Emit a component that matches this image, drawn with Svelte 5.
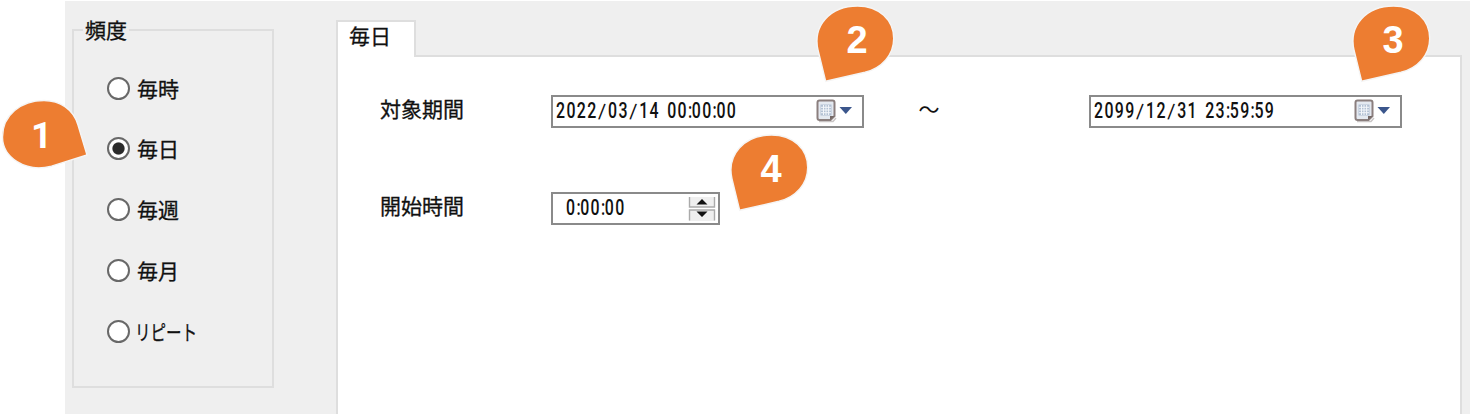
<script>
  const options = ['毎時', '毎日', '毎週', '毎月', 'リピート'];
  const selected = '毎日';

  const tail = 'M9.7 76.3 L2 45 C-3.5 21 14 1 41.5 1 C63 1 77.7 15 77.7 33.5 C77.7 50 66 63 49 67.3 Z';
  const side = 'M86 56 L50.5 67.2 C24 74 1.5 58 1.5 38 C1.5 16 20 1.5 43 1.5 C59 1.5 72.5 10.5 77 26 Z';
  const pins = [
    { n: 1, x: 1, y: 99, d: side, tx: 40.5, ty: 48.5 },
    { n: 2, x: 816, y: 5, d: tail, tx: 41, ty: 48.3 },
    { n: 3, x: 1352, y: 5, d: tail, tx: 41, ty: 48.3 },
    { n: 4, x: 729.6, y: 134, d: tail, tx: 41, ty: 48.3 }
  ];

  const squeeze = 0.74;
  const advance = { ':': 3.8, '/': 10.4, ' ': 7.2 };
  const bearing = { ':': 0, '/': 0.6 };
  function positions(value) {
    let x = 0;
    return [...value].map((c) => {
      const at = (x + (bearing[c] ?? 0)) / squeeze;
      x += advance[c] ?? 10.4;
      return at.toFixed(2);
    }).join(' ');
  }
  function tilts(value) {
    return [...value].map((c) => (c === '/' ? 8 : 0)).join(' ');
  }
</script>

{#snippet digits(value)}
  <svg class="digits" width="190" height="28">
    <text transform="scale({squeeze} 1)" x={positions(value)} rotate={tilts(value)} y="21">{value}</text>
  </svg>
{/snippet}

{#snippet dateField(value)}
  <div class="field date">
    {@render digits(value)}
    <svg class="calendar" width="37" height="24" viewBox="0 0 37 24">
      <path d="M3 22.5H17L20 19" fill="none" stroke="#c9c5c5" stroke-width="1.5" />
      <path d="M3.5 1.5H16.5Q18.5 1.5 18.5 3.5V17L14.5 21H3.5Q1.5 21 1.5 19V3.5Q1.5 1.5 3.5 1.5Z" fill="#e4e9f0" stroke="#8b7f7e" stroke-width="2" />
      <rect x="4.5" y="5.5" width="11" height="11" fill="#b3c1d3" />
      <path d="M5 8.3H15M5 11H15M5 13.7H15M7.5 6V16M10 6V16M12.6 6V16" stroke="#f3f6fa" />
      <path d="M14 21V17H18.5Z" fill="#756967" />
      <path d="M23.5 8H36L29.8 15Z" fill="#3b568c" />
    </svg>
  </div>
{/snippet}

<main>
  <section class="window">
    <fieldset>
      <legend>頻度</legend>
      {#each options as option}
        <div class="option">
          <span class="radio" class:on={option === selected}></span>
          <span class="name" class:kana={option === 'リピート'}>{option}</span>
        </div>
      {/each}
    </fieldset>

    <div class="tabs">
      <div class="tab">毎日</div>
      <div class="panel">
        <div class="row">
          <span class="label">対象期間</span>
          {@render dateField('2022/03/14 00:00:00')}
          <svg class="tilde" width="22" height="10" viewBox="0 0 22 10">
            <text x="11" y="14" text-anchor="middle">～</text>
          </svg>
          {@render dateField('2099/12/31 23:59:59')}
        </div>
        <div class="row">
          <span class="label">開始時間</span>
          <div class="field time">
            {@render digits('0:00:00')}
            <svg class="spinner" width="28" height="26" viewBox="0 0 28 26">
              <path d="M1 1H27V11H1ZM1 14H27V25H1Z" fill="#efefef" />
              <path d="M1.5 1V11H26.5V1M1.5 24.5V14H26.5V24.5" fill="none" stroke="#aaa" stroke-width="1.4" />
              <path d="M8.5 8.5H19.5L14 3ZM8.5 15.5H19.5L14 21Z" fill="#111" />
            </svg>
          </div>
        </div>
      </div>
    </div>
  </section>

  {#each pins as pin}
    <svg class="pin" style="left:{pin.x}px;top:{pin.y}px" width="90" height="80">
      <path d={pin.d} />
      <text class:one={pin.n === 1} x={pin.tx} y={pin.ty} text-anchor="middle">{pin.n}</text>
    </svg>
  {/each}
</main>

<style>
  :global(body) { margin: 0; background: #fff; }
  main {
    position: relative;
    box-sizing: border-box;
    width: 1470px;
    height: 414px;
    padding: 1px 0 0 65px;
    overflow: hidden;
    font: 21px/24px "Noto Sans CJK JP", sans-serif;
    color: #111;
    -webkit-text-stroke: .3px #111;
  }
  .window { display: flex; height: 413px; background: #efefef; }
  fieldset {
    box-sizing: border-box;
    width: 202px;
    height: 370px;
    margin: 17px 0 0 7px;
    padding: 34px 0 0 33px;
    border: 2px solid #dedede;
    min-width: 0;
  }
  legend { margin-left: -24px; padding: 0 2px; height: 24px; line-height: 22px; }
  .option { display: flex; align-items: center; gap: 7px; height: 24px; margin-bottom: 36.8px; white-space: nowrap; }
  .radio { box-sizing: border-box; width: 23px; height: 23px; border: 2px solid #686868; border-radius: 50%; background: #fff; }
  .on { background: radial-gradient(circle, #2b2b2b 5.6px, #fff 6.6px); }
  .name { line-height: 22px; padding-bottom: 1px; }
  .kana { transform: scaleX(.74); transform-origin: left; margin-left: -2px; }
  .tabs { display: flex; flex-direction: column; width: 1126px; margin: 19px 0 0 62px; }
  .tab {
    box-sizing: border-box;
    flex: none;
    width: 80px;
    height: 37px;
    padding: 1px 0 0 11px;
    border: 2px solid #dedede;
    border-bottom: 0;
    background: #fff;
    z-index: 1;
  }
  .panel {
    box-sizing: border-box;
    flex: none;
    height: 400px;
    margin-top: -2px;
    padding: 38px 0 0 42px;
    border: 2px solid #dedede;
    background: #fff;
  }
  .row { display: flex; height: 33px; margin-bottom: 64px; }
  .label { width: 171px; padding-top: 1px; }
  .field { box-sizing: border-box; display: flex; height: 33px; border: 2px solid #8a8a8a; background: #fff; }
  .date { width: 313px; }
  .time { width: 169px; padding-left: 10px; }
  .digits { flex: none; margin-left: 2.5px; }
  .digits text { font: 500 21.5px Roboto, sans-serif; fill: #111; -webkit-text-stroke: 0; }
  .calendar { margin: 2px 0 0 70.5px; }
  .time .digits { width: 120px; }
  .spinner { margin: 2px 0 0 2.5px; }
  .tilde { margin: 8px 149px 0 54px; overflow: visible; }
  .tilde text { font: 21px "Noto Sans CJK JP", sans-serif; fill: #111; }
  .pin { position: absolute; z-index: 2; overflow: visible; }
  .pin path { fill: #ed7d31; stroke: #f5f5f5; stroke-width: 1.4; }
  .pin text { font: bold 38px "Liberation Sans", sans-serif; fill: #fff; -webkit-text-stroke: 0; }
  .pin text.one { font: bold 37px Roboto, sans-serif; }
</style>
